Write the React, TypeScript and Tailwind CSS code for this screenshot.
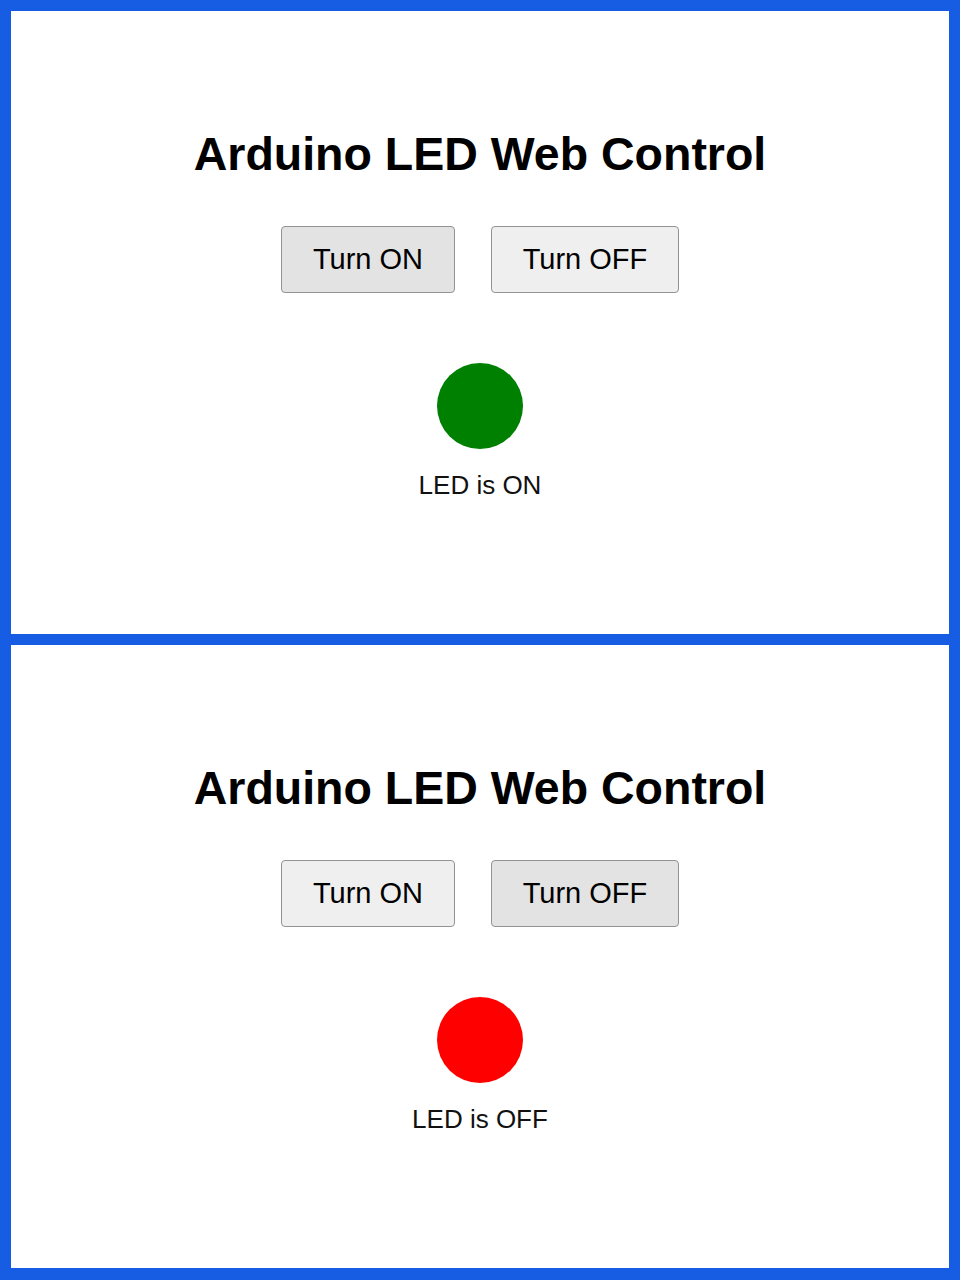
import React from 'react'

interface PanelProps {
    on: boolean
}

function Panel({ on }: PanelProps) {
    const active = "bg-[#e3e3e3]"
    const idle = "bg-[#efefef]"
    return (
        <div className="flex-1 bg-white flex flex-col items-center pt-[120px]">
            <h1 className="text-[46.5px] leading-none font-bold text-black">Arduino LED Web Control</h1>

            <div className="flex gap-[36px] mt-[48px]">
                <button className={`h-[67px] w-[174px] border border-[#939393] rounded-[4px] text-[29px] leading-none text-black ${on ? active : idle}`}>
                    Turn ON
                </button>
                <button className={`h-[67px] w-[188px] border border-[#939393] rounded-[4px] text-[29px] leading-none text-black ${on ? idle : active}`}>
                    Turn OFF
                </button>
            </div>

            {on ? (
                <div className="w-[86px] h-[86px] rounded-full bg-[#008000] mt-[70px]" />
            ) : (
                <div className="w-[86px] h-[86px] rounded-full bg-[#ff0000] mt-[70px]" />
            )}

            <p className="mt-[23px] text-[26px] leading-none text-[#111]">
                {on ? "LED is ON" : "LED is OFF"}
            </p>
        </div>
    )
}

export default function App() {
    return (
        <div
            className="w-[960px] h-[1280px] bg-[#175de3] p-[11px] pb-[12px] flex flex-col gap-[11px]"
            style={{ fontFamily: '"Liberation Sans", Arial, sans-serif' }}
        >
            <Panel on={true} />
            <Panel on={false} />
        </div>
    )
}
